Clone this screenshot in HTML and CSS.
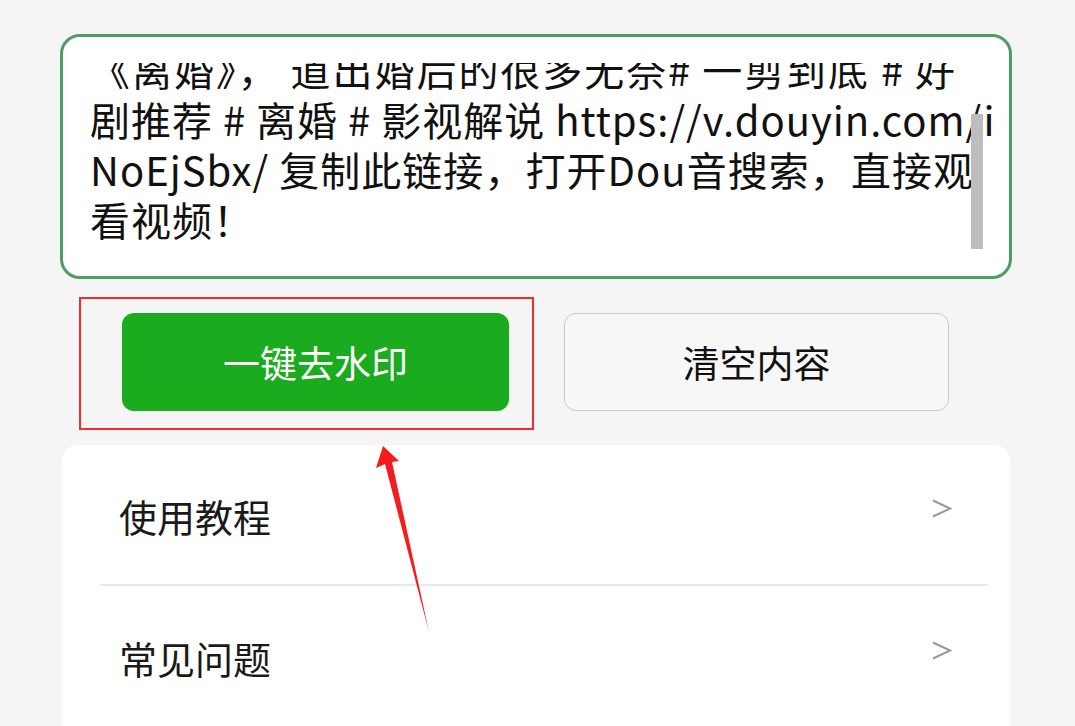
FILE: index.html
```html
<!DOCTYPE html>
<html lang="zh-CN">
<head>
<meta charset="utf-8">
<title>一键去水印</title>
<link rel="stylesheet" href="styles.css">
</head>
<body>
<main class="page">
  <section class="input">
    <div class="viewport">
      <div class="text">
        <span class="line line-first">《离婚》， 道出婚后的很多无奈# 一剪到底 # 好</span>
        <span class="line">剧推荐 # 离婚 # 影视解说 https://v.douyin.com/i</span>
        <span class="line">NoEjSbx/ 复制此链接，打开Dou音搜索，直接观</span>
        <span class="line line-last">看视频！</span>
      </div>
    </div>
    <div class="scrollbar"></div>
  </section>

  <section class="actions">
    <div class="highlight">
      <button class="btn btn-primary" type="button">一键去水印</button>
    </div>
    <button class="btn btn-clear" type="button">清空内容</button>
  </section>

  <section class="card">
    <div class="row row-divided">
      <span class="row-label">使用教程</span>
      <svg class="chevron" width="20" height="20" viewBox="0 0 20 20"><polyline points="1,1.5 18,9.5 1,17.5" fill="none" stroke="#9a9a9a" stroke-width="2"/></svg>
    </div>
    <div class="row">
      <span class="row-label">常见问题</span>
      <svg class="chevron" width="20" height="20" viewBox="0 0 20 20"><polyline points="1,1.5 18,9.5 1,17.5" fill="none" stroke="#9a9a9a" stroke-width="2"/></svg>
    </div>
  </section>

  <svg class="arrow" width="1075" height="726" viewBox="0 0 1075 726">
    <polygon points="383,446 399,461 392,462 429,632 385,464 376,468" fill="#f41c1c"/>
  </svg>
</main>
</body>
</html>
```

FILE: styles.css
```css
* {
  box-sizing: border-box;
}

html, body {
  margin: 0;
  padding: 0;
  background: #f5f5f5;
}

body {
  font-family: "Noto Sans CJK SC", "Noto Sans", sans-serif;
  color: #111;
  height: 726px;
  overflow: hidden;
}

.page {
  position: relative;
  padding: 34px 63px 0 60px;
  height: 726px;
}

.input {
  position: relative;
  height: 245px;
  border: 3px solid #4f9d62;
  border-radius: 20px;
  background: #fff;
  padding: 26px 0 26px 27px;
}

.viewport {
  height: 187px;
  overflow: hidden;
}

.text {
  margin-top: -19px;
  width: 884px;
  font-size: 40px;
  line-height: 50px;
  letter-spacing: 1px;
  color: #111;
}

.line {
  display: block;
  white-space: nowrap;
  text-align: justify;
  text-align-last: justify;
}

.line-first {
  padding-right: 18px;
}

.line-last {
  text-align-last: left;
}

.scrollbar {
  position: absolute;
  left: 908px;
  top: 77px;
  width: 12px;
  height: 135px;
  background: #bdbdbd;
}

.actions {
  display: flex;
  align-items: flex-start;
  margin-top: 18px;
  padding-left: 19px;
}

.highlight {
  border: 2px solid #f52a2a;
  padding: 14px 23px 17px 41px;
}

.btn {
  display: flex;
  align-items: center;
  justify-content: center;
  height: 98px;
  border-radius: 12px;
  font-family: "Noto Sans CJK SC", sans-serif;
  font-size: 37px;
  padding: 0;
  cursor: pointer;
}

.btn-primary {
  width: 387px;
  background: #1aab1e;
  border: none;
  color: #fff;
}

.btn-clear {
  width: 385px;
  margin-left: 30px;
  margin-top: 16px;
  background: #f7f7f7;
  border: 1px solid #c9c9c9;
  color: #111;
}

.card {
  margin: 15px 2px 0 2px;
  background: #fff;
  border-radius: 16px 16px 0 0;
  padding: 0 22px 0 38px;
  height: 300px;
}

.row {
  display: flex;
  align-items: center;
  justify-content: space-between;
  height: 141px;
  padding: 0 36px 0 19px;
}

.row-divided {
  border-bottom: 2px solid #e8e8e8;
}

.row-label {
  font-size: 38px;
  color: #1a1a1a;
  padding-top: 2px;
}

.chevron {
  margin-bottom: 12px;
}

.arrow {
  position: absolute;
  left: 0;
  top: 0;
  pointer-events: none;
}
```
